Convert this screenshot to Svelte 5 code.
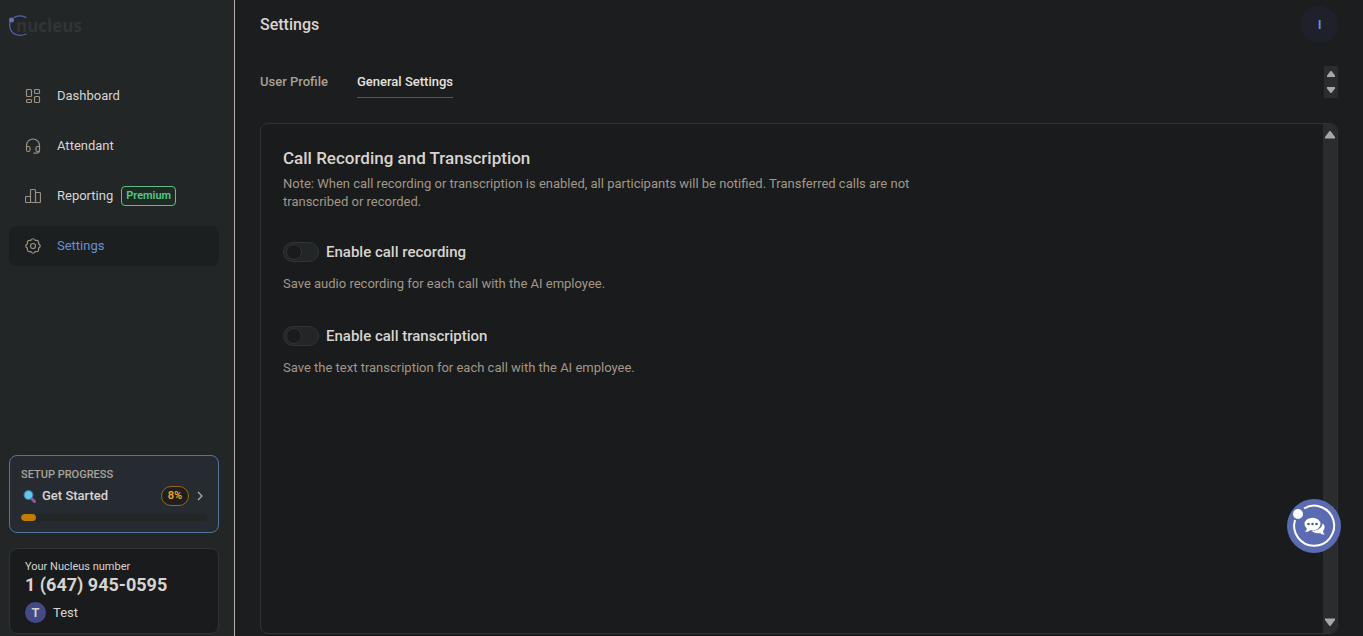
<script>
  let recording = $state(false);
  let transcription = $state(false);
  const progress = 8;
</script>

<div class="app">
  <aside class="sidebar">
    <a class="logo" href="#home">
      <svg width="22" height="22" viewBox="0 0 22 22" aria-hidden="true">
        <path d="M4.500 2.800C8 .4 13.500 .2 17.500 2.800M1 6.500C-.5 15.500 4.500 23.500 17.500 19" fill="none" stroke="#5161a8" stroke-width="1.300" />
        <circle cx="2.500" cy="5" r="2.500" fill="#6072bd" />
      </svg>
      <span>nucleus</span>
    </a>

    <nav>
      <a href="#dashboard">
        <svg width="16" height="16" viewBox="0 0 16 16" aria-hidden="true">
          <rect x="1.500" y="1.500" width="5" height="7" rx="1" /><rect x="9.500" y="1.500" width="5" height="4" rx="1" />
          <rect x="1.500" y="11.500" width="5" height="3" rx="1" /><rect x="9.500" y="8.500" width="5" height="6" rx="1" />
        </svg>
        Dashboard
      </a>
      <a href="#attendant">
        <svg width="16" height="16" viewBox="0 0 16 16" aria-hidden="true">
          <path d="M1.500 10V7.500a6.500 6.500 0 0 1 13 0V12c0 2-1.500 3.200-3.500 3.200H8.500M1.500 8.500h2A1.500 1.500 0 0 1 5 10v2a1.500 1.500 0 0 1-1.500 1.500H3A1.500 1.500 0 0 1 1.500 12zM14.500 8.500h-2A1.500 1.500 0 0 0 11 10v2a1.500 1.500 0 0 0 1.500 1.500h.5a1.500 1.500 0 0 0 1.500-1.500" />
        </svg>
        Attendant
      </a>
      <a href="#reporting">
        <svg width="16" height="16" viewBox="0 0 16 16" aria-hidden="true">
          <path d="M5.500 14.500h-4a1 1 0 0 1-1-1v-4a1 1 0 0 1 1-1h4zM5.500 14.500v-12a1 1 0 0 1 1-1h3a1 1 0 0 1 1 1v12zM10.500 14.500V4.500h4a1 1 0 0 1 1 1v8a1 1 0 0 1-1 1z" />
        </svg>
        Reporting <span class="premium">Premium</span>
      </a>
      <a class="active" href="#settings" aria-current="page">
        <svg width="16" height="16" viewBox="0 0 16 16" aria-hidden="true">
          <path d="M5.700 2.460Q8-1 10.300 2.460Q14.360 1.640 13.540 5.700Q17 8 13.540 10.300Q14.360 14.360 10.300 13.540Q8 17 5.700 13.540Q1.640 14.360 2.460 10.300Q-1 8 2.460 5.700Q1.640 1.640 5.700 2.460z" />
          <circle cx="8" cy="8" r="2.500" />
        </svg>
        Settings
      </a>
    </nav>

    <a class="setup" href="#setup">
      <span class="caption">SETUP PROGRESS</span>
      <span class="step">
        <svg width="16" height="16" viewBox="0 0 16 16" aria-hidden="true">
          <path d="m11 11 2.500 2.500" stroke="#8a5a9c" stroke-width="3" stroke-linecap="round" />
          <circle cx="7.500" cy="7" r="4.500" fill="#62c8ea" stroke="#3c6f9c" />
        </svg>
        <span class="name">Get Started</span>
        <span class="percent">{progress}%</span>
        <svg width="8" height="10" viewBox="0 0 8 10" aria-hidden="true"><path d="m2 1 4 4-4 4" fill="none" stroke="#b5b0a8" stroke-width="1.200" /></svg>
      </span>
      <span class="track"><span class="fill" style="width: {progress}%"></span></span>
    </a>

    <section class="number">
      <p>Your Nucleus number</p>
      <strong>1 (647) 945-0595</strong>
      <div class="owner"><span>T</span>Test</div>
    </section>
  </aside>

  <main>
    <header>
      <h1>Settings</h1>
      <button class="avatar">I</button>
    </header>

    <div class="tabs">
      <a href="#profile">User Profile</a>
      <a class="current" href="#general" aria-current="page">General Settings</a>
      <div class="scrollbar short">
        <svg width="8" height="6" viewBox="0 0 8 6" aria-hidden="true"><path d="M3.500 0h1L8 4.500V6H0V4.500z" /></svg>
        <svg width="8" height="6" viewBox="0 0 8 6" aria-hidden="true"><path d="M0 0h8v1.500L4.500 6h-1L0 1.500z" /></svg>
      </div>
    </div>

    <section class="panel">
      <div class="content">
        <h2>Call Recording and Transcription</h2>
        <p class="note">Note: When call recording or transcription is enabled, all participants will be notified. Transferred calls are not transcribed or recorded.</p>
        <div class="option">
          <label><input type="checkbox" role="switch" bind:checked={recording} />Enable call recording</label>
          <p>Save audio recording for each call with the AI employee.</p>
        </div>
        <div class="option">
          <label><input type="checkbox" role="switch" bind:checked={transcription} />Enable call transcription</label>
          <p>Save the text transcription for each call with the AI employee.</p>
        </div>
      </div>
      <div class="scrollbar">
        <svg width="10" height="8" viewBox="0 0 10 8" aria-hidden="true"><path d="M4.500 0h1L10 6v1.500H0V6z" /></svg>
        <svg width="10" height="8" viewBox="0 0 10 8" aria-hidden="true"><path d="M0 .5h10V2L5.500 8h-1L0 2z" /></svg>
      </div>
    </section>
  </main>

  <button class="chat" aria-label="Open chat">
    <svg width="54" height="54" viewBox="0 0 54 54" aria-hidden="true">
      <circle cx="27" cy="27" r="27" fill="#5b6bb2" />
      <path d="M17 9.500A20 20 0 1 1 8 21" fill="none" stroke="#fff" stroke-width="2" />
      <circle cx="11" cy="15" r="5" fill="#fff" />
      <path d="M35.500 24.500c2.500 1.200 3 5 .5 7.500.2 1.800 1 2.800 1.700 3.800-2.200 0-3.600-.8-4.600-1.700-3.600.6-7.100-.4-8.600-2.600 6.500.3 10.800-2.600 11-7z" fill="#fff" />
      <ellipse cx="25.500" cy="25" rx="8" ry="6.300" fill="#fff" />
      <path d="M20 28c0 2.500-.8 3.800-2 5 3 0 4.800-1 6-2.500z" fill="#fff" />
      <g fill="#4e5c9e"><circle cx="21.500" cy="25" r="1.300" /><circle cx="25.500" cy="25" r="1.300" /><circle cx="29.500" cy="25" r="1.300" /></g>
    </svg>
  </button>
</div>

<style>
  :global(body) { margin: 0; background: #1b1d1e; }
  * { box-sizing: border-box; }
  h1, h2, p { margin: 0; }
  a { color: inherit; text-decoration: none; }
  button { border: 0; padding: 0; font: inherit; cursor: pointer; }
  .app { display: flex; min-height: 100vh; font: 13px/18px Roboto, sans-serif; color: #d8d4cf; }

  .sidebar { display: flex; flex-direction: column; flex: none; width: 235px; padding: 15px 15px 2px 9px; background: #222627; border-right: 1px solid #b5b1aa; }
  .logo { display: flex; align-items: center; height: 22px; font: 700 17px/20px "Open Sans", sans-serif; color: #313537; }
  .logo span { margin-left: -15px; }
  nav { display: flex; flex-direction: column; gap: 10px; margin-top: 39px; }
  nav a { display: flex; align-items: center; height: 40px; padding-left: 16px; border-radius: 8px; }
  nav svg { margin-right: 16px; fill: none; stroke: #9a9184; stroke-width: 1.2; }
  nav .active { background: #1c1f20; color: #6c90cc; }
  .premium { margin-left: 8px; padding: 0 4px; border: 1px solid #5cbf85; border-radius: 4px; background: #1f2a25; color: #55c985; font-size: 11px; font-weight: 600; }

  .setup { display: flex; flex-direction: column; margin-top: auto; height: 78px; padding: 11px 11px 0; border: 1px solid #57749f; border-radius: 8px; background: #262b31; }
  .caption { font-size: 11px; line-height: 16px; font-weight: 500; color: #aaa49a; }
  .step { display: flex; align-items: center; height: 26px; padding-right: 3px; font-weight: 500; }
  .name { flex: 1; margin-left: 5px; }
  .percent { width: 28px; margin-right: 7px; border: 1px solid #96670f; border-radius: 10px; background: #1e1f1f; color: #f5a524; font-size: 11px; font-weight: 600; text-align: center; }
  .track { height: 7px; margin-top: 5px; border-radius: 4px; background: #222627; overflow: hidden; }
  .fill { display: block; height: 100%; border-radius: 4px; background: #c27c04; }

  .number { height: 86px; margin-top: 15px; padding: 10px 15px; border: 1px solid #2f3335; border-radius: 8px; background: #191b1c; }
  .number p { font-size: 11px; line-height: 16px; }
  .number strong { display: block; font-size: 18px; line-height: 20px; font-weight: 700; }
  .owner { display: flex; align-items: center; gap: 7px; margin-top: 7px; }
  .owner span { width: 21px; height: 21px; border-radius: 50%; background: #434a87; line-height: 21px; font-weight: 600; text-align: center; }

  main { display: flex; flex-direction: column; flex: 1; min-width: 0; padding: 6px 25px 2px; }
  header { display: flex; align-items: center; justify-content: space-between; height: 37px; }
  h1 { font-size: 16px; line-height: 20px; font-weight: 500; }
  .avatar { width: 37px; height: 37px; border-radius: 50%; background: #1e2129; color: #6093dd; font-weight: 600; }
  .tabs { display: flex; gap: 29px; height: 32px; margin-top: 23px; line-height: 32px; font-weight: 500; color: #a8a095; }
  .tabs .current { border-bottom: 1px solid #555a50; color: #e6e3df; }
  .scrollbar { display: flex; flex-direction: column; justify-content: space-between; align-items: center; flex: none; width: 14px; padding: 7px 0; background: #2b2c2d; fill: #a8a8a8; }
  .short { margin-left: auto; padding: 5px 0; }
  .panel { display: flex; flex: 1; margin-top: 25px; border: 1px solid #2f3335; border-radius: 8px; background: #191b1c; overflow: hidden; }
  .content { flex: 1; padding: 24px 22px; }
  h2 { font-size: 17px; line-height: 20px; font-weight: 500; }
  .note { max-width: 640px; margin-top: 7px; }
  .content p { color: #a29788; }
  .option { margin-top: 31px; }
  .option + .option { margin-top: 33px; }
  label { display: flex; align-items: center; gap: 7px; height: 20px; font-size: 15px; font-weight: 500; }
  input { appearance: none; display: flex; align-items: center; width: 36px; height: 20px; margin: 0; padding: 0 2px; border: 1px solid #303537; border-radius: 10px; background: #222627; cursor: pointer; }
  input::before { content: ""; width: 14px; height: 14px; border: 1px solid #303537; border-radius: 50%; background: #191b1c; }
  input:checked { justify-content: flex-end; background: #434a87; }
  .option p { margin-top: 13px; }
  .chat { position: fixed; right: 22px; bottom: 83px; width: 54px; height: 54px; border-radius: 50%; background: none; }
  .chat svg { display: block; }
</style>
